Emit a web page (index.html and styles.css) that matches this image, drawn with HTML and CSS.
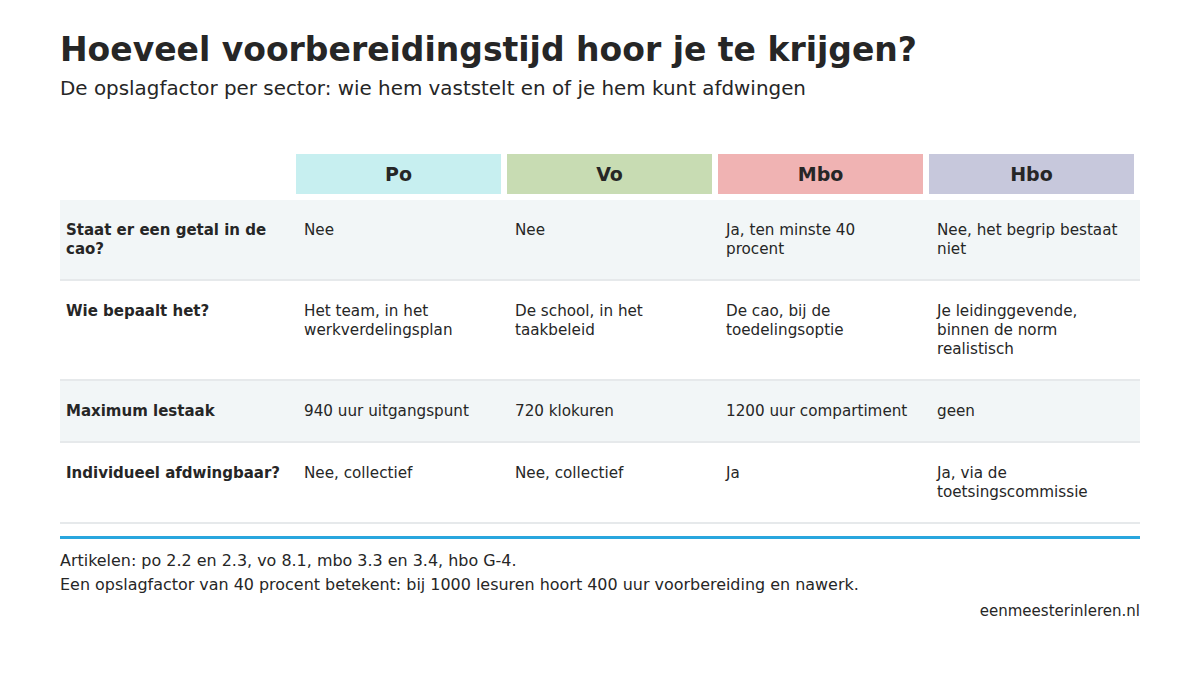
FILE: index.html
```html
<!DOCTYPE html>
<html lang="nl">
<head>
<meta charset="utf-8">
<title>Opslagfactor per sector</title>
<link rel="stylesheet" href="styles.css">
</head>
<body>
<main class="page">
  <h1 class="title">Hoeveel voorbereidingstijd hoor je te krijgen?</h1>
  <p class="subtitle">De opslagfactor per sector: wie hem vaststelt en of je hem kunt afdwingen</p>

  <div class="table">
    <div class="row head">
      <div class="label"></div>
      <div class="hcell po">Po</div>
      <div class="hcell vo">Vo</div>
      <div class="hcell mbo">Mbo</div>
      <div class="hcell hbo">Hbo</div>
    </div>
    <div class="row body striped">
      <div class="label">Staat er een getal in de cao?</div>
      <div class="cell">Nee</div>
      <div class="cell">Nee</div>
      <div class="cell">Ja, ten minste 40 procent</div>
      <div class="cell">Nee, het begrip bestaat niet</div>
    </div>
    <div class="row body">
      <div class="label">Wie bepaalt het?</div>
      <div class="cell">Het team, in het werkverdelingsplan</div>
      <div class="cell">De school, in het taakbeleid</div>
      <div class="cell">De cao, bij de toedelingsoptie</div>
      <div class="cell">Je leidinggevende, binnen de norm realistisch</div>
    </div>
    <div class="row body striped">
      <div class="label">Maximum lestaak</div>
      <div class="cell">940 uur uitgangspunt</div>
      <div class="cell">720 klokuren</div>
      <div class="cell">1200 uur compartiment</div>
      <div class="cell">geen</div>
    </div>
    <div class="row body">
      <div class="label">Individueel afdwingbaar?</div>
      <div class="cell">Nee, collectief</div>
      <div class="cell">Nee, collectief</div>
      <div class="cell">Ja</div>
      <div class="cell">Ja, via de toetsingscommissie</div>
    </div>
  </div>

  <footer class="footer">
    <p class="note">Artikelen: po 2.2 en 2.3, vo 8.1, mbo 3.3 en 3.4, hbo G-4.</p>
    <p class="note">Een opslagfactor van 40 procent betekent: bij 1000 lesuren hoort 400 uur voorbereiding en nawerk.</p>
    <p class="credit">eenmeesterinleren.nl</p>
  </footer>
</main>
</body>
</html>
```

FILE: styles.css
```css
* { box-sizing: border-box; }

html, body {
  margin: 0;
  padding: 0;
  background: #ffffff;
}

body {
  font-family: "DejaVu Sans", "Liberation Sans", sans-serif;
  color: #262626;
}

.page {
  width: 1200px;
  padding: 31px 60px 0 60px;
}

.title {
  margin: 0;
  font-size: 33px;
  line-height: 38px;
  font-weight: bold;
  color: #262626;
}

.subtitle {
  margin: 7px 0 0 0;
  font-size: 19.9px;
  line-height: 25px;
}

.table {
  margin-top: 53px;
  width: 1080px;
}

.row {
  display: grid;
  grid-template-columns: 230px repeat(4, 205px);
  column-gap: 6px;
  padding-right: 6px;
  font-size: 15.2px;
  line-height: 19px;
}

.row.head {
  margin-bottom: 6px;
}

.hcell {
  height: 40px;
  display: flex;
  align-items: center;
  justify-content: center;
  font-size: 19px;
  font-weight: bold;
}

.po { background: #c7eff0; }
.vo { background: #c8dcb3; }
.mbo { background: #f0b3b3; }
.hbo { background: #c7c8dc; }

.row.body {
  border-bottom: 2px solid #e6e9eb;
}

.row.striped {
  background: #f2f6f7;
}

.label {
  padding: 0 6px;
}

.body .label {
  padding: 21px 8px 20px 6px;
  font-size: 15px;
  font-weight: bold;
}

.cell {
  padding: 21px 8px 20px 8px;
}

.footer {
  margin-top: 12px;
  border-top: 3px solid #29a6de;
  padding-top: 10px;
}

.note {
  margin: 0;
  font-size: 15.95px;
  line-height: 24px;
}

.credit {
  margin: 2px 0 0 0;
  font-size: 15px;
  line-height: 24px;
  text-align: right;
}
```
